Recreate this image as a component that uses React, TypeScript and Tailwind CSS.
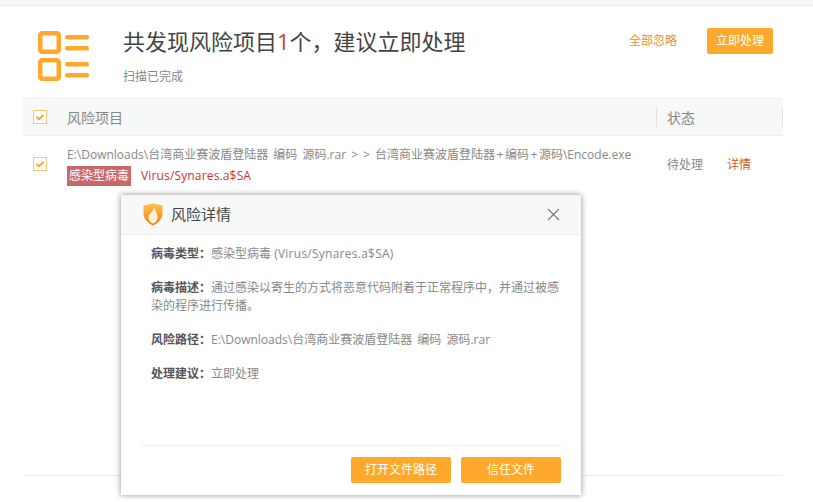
const font = { fontFamily: '"Open Sans", "Noto Sans CJK SC", sans-serif' };

const Check = () => (
  <span className="flex h-[14px] w-[14px] items-center justify-center border border-[#fbc874] bg-white">
    <svg width="10" height="8" viewBox="0 0 11 9">
      <path d="M1.5 4.5 L4.3 7 L9.5 2" fill="none" stroke="#ffa726" strokeWidth="2" />
    </svg>
  </span>
);

const ListIcon = () => (
  <svg width="52" height="52" viewBox="0 0 52 52" className="shrink-0">
    <g fill="none" stroke="#ffa92c" strokeWidth="4.5">
      <rect x="2.25" y="2.25" width="18.5" height="18.5" rx="2" />
      <rect x="2.25" y="29.25" width="18.5" height="18.5" rx="2" />
    </g>
    <g fill="#ffa92c">
      <rect x="27" y="4" width="24" height="4.5" rx="2" />
      <rect x="27" y="15" width="24" height="4.5" rx="2" />
      <rect x="27" y="31" width="24" height="4.5" rx="2" />
      <rect x="27" y="42" width="24" height="4.5" rx="2" />
    </g>
  </svg>
);

const Shield = () => (
  <svg width="20" height="23" viewBox="0 0 20 23">
    <defs>
      <linearGradient id="sh" x1="0" y1="0" x2="0" y2="1">
        <stop offset="0" stopColor="#ffc04a" />
        <stop offset="1" stopColor="#f08010" />
      </linearGradient>
    </defs>
    <path d="M0.5 2.5 L10 0.5 L19.5 2.5 L19.5 11 C19.5 16.5 14 20.5 10 22.5 C6 20.5 0.5 16.5 0.5 11 Z" fill="url(#sh)" />
    <path d="M11.5 4.5 C12 8 14.5 10 14.5 14 C14.5 17 12.5 20 10 20.5 C7.5 20 5.5 17.5 5.5 14.5 C5.5 11 9.5 9 11.5 4.5 Z" fill="#fff1d6" />
  </svg>
);

const Info = ({ label, children }: { label: string; children: React.ReactNode }) => (
  <p className="text-[12px] leading-[18px] text-[#888]">
    <span className="font-bold text-[#555]">{label}</span>
    {children}
  </p>
);

export default function App() {
  return (
    <div className="relative h-[502px] w-[813px] overflow-hidden bg-white" style={font}>
      <div className="h-[6px] border-b border-[#ececec] bg-[#f6f8f8]" />

      <div className="flex h-[92px] pl-[38px] pr-[40px] pt-[25px]">
        <ListIcon />
        <div className="ml-[33px] flex-1">
          <h1 className="-mt-[1px] text-[22px] leading-[22px] font-normal text-[#444]">
            共发现风险项目<span className="text-[#c9402c]">1</span>个，建议立即处理
          </h1>
          <p className="mt-[18px] text-[12px] leading-[14px] text-[#888]">扫描已完成</p>
        </div>
        <div className="-mt-[3px] flex h-[26px] items-center">
          <button className="text-[12px] text-[#e8912a]">全部忽略</button>
          <button className="ml-[30px] h-[26px] w-[66px] rounded-[2px] bg-[#ffa92c] text-[12px] text-white">立即处理</button>
        </div>
      </div>

      <div className="mx-[23px] w-[760px]">
        <div className="flex h-[38px] items-center border-y border-[#eeeeee] bg-[#f7f8f8] text-[14px] text-[#888]">
          <div className="ml-[10px] w-[34px]"><Check /></div>
          <div className="flex-1">风险项目</div>
          <div className="flex h-[20px] w-[127px] items-center border-x border-[#e2e2e2] pl-[10px]">状态</div>
        </div>
        <div className="flex h-[58px] items-center">
          <div className="ml-[10px] -mt-[2px] w-[34px]"><Check /></div>
          <div className="flex-1">
            <div className="text-[12px] leading-[20px] text-[#888] [word-spacing:2px]">
              E:\Downloads\台湾商业赛波盾登陆器 编码 源码.rar &gt; &gt; 台湾商业赛波盾登陆器<span className="px-[1.5px]">+</span>编码<span className="px-[1.5px]">+</span>源码\Encode.exe
            </div>
            <div className="mt-[1px] flex items-center text-[12px]">
              <span className="flex h-[20px] w-[64px] items-center justify-center bg-[#c9686a] text-white">感染型病毒</span>
              <span className="ml-[10px] tracking-[0.15px] text-[#c5352d]">Virus/Synares.a$SA</span>
            </div>
          </div>
          <div className="flex w-[127px] pl-[11px] text-[12px] text-[#888]">
            <span>待处理</span>
            <span className="ml-[24px] text-[#cf5a22]">详情</span>
          </div>
        </div>
      </div>

      <div className="absolute top-[475px] left-[23px] h-px w-[760px] bg-[#eeeeee]" />

      <div className="absolute top-[195px] left-[121px] flex h-[300px] w-[460px] flex-col bg-white shadow-[0_0_6px_rgba(0,0,0,0.45)]">
        <div className="flex h-[40px] items-center border-b border-[#eeeeee] bg-[#f7f9f8] pl-[22px] pr-[21px]">
          <Shield />
          <span className="ml-[8px] flex-1 text-[15px] text-[#444]">风险详情</span>
          <svg width="13" height="13" viewBox="0 0 13 13">
            <path d="M1 1 L12 12 M12 1 L1 12" stroke="#777" strokeWidth="1.1" fill="none" />
          </svg>
        </div>
        <div className="flex flex-1 flex-col px-[20px] pt-[10px]">
          <div className="pl-[10px]">
            <Info label="病毒类型：">感染型病毒 <span className="tracking-[0.25px]">(Virus/Synares.a$SA)</span></Info>
            <div className="mt-[16px]">
              <Info label="病毒描述：">通过感染以寄生的方式将恶意代码附着于正常程序中，并通过被感染的程序进行传播。</Info>
            </div>
            <div className="mt-[16px]">
              <Info label="风险路径："><span className="[word-spacing:2px]">E:\Downloads\台湾商业赛波盾登陆器 编码 源码.rar</span></Info>
            </div>
            <div className="mt-[16px]">
              <Info label="处理建议：">立即处理</Info>
            </div>
          </div>
          <div className="mt-auto flex h-[50px] justify-end gap-[10px] border-t border-[#eeeeee] pt-[11px]">
            <button className="h-[26px] w-[100px] rounded-[2px] bg-[#ffa92c] text-[12px] text-white">打开文件路径</button>
            <button className="h-[26px] w-[100px] rounded-[2px] bg-[#ffa92c] text-[12px] text-white">信任文件</button>
          </div>
        </div>
      </div>
    </div>
  );
}
